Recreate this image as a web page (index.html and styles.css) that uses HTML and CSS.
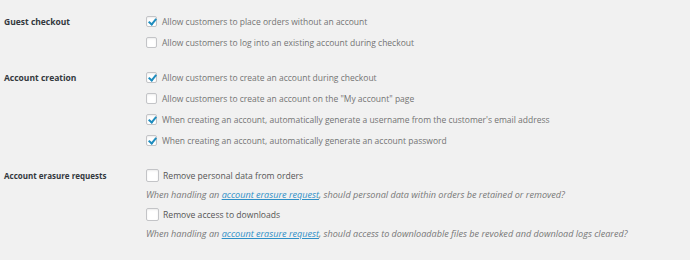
FILE: index.html
```html
<!DOCTYPE html>
<html lang="en">
<head>
    <meta charset="UTF-8">
    <meta name="viewport" content="width=device-width, initial-scale=1.0">
    <title>Accounts &amp; Privacy</title>
    <link rel="stylesheet" href="styles.css">
</head>
<body>
    <div class="settings">
        <div class="section">
            <div class="label">Guest checkout</div>
            <div class="options">
                <label class="option"><span class="box checked"></span>Allow customers to place orders without an account</label>
                <label class="option"><span class="box"></span>Allow customers to log into an existing account during checkout</label>
            </div>
        </div>
        <div class="section">
            <div class="label">Account creation</div>
            <div class="options">
                <label class="option"><span class="box checked"></span>Allow customers to create an account during checkout</label>
                <label class="option"><span class="box"></span>Allow customers to create an account on the "My account" page</label>
                <label class="option"><span class="box checked"></span>When creating an account, automatically generate a username from the customer's email address</label>
                <label class="option"><span class="box checked"></span>When creating an account, automatically generate an account password</label>
            </div>
        </div>
        <div class="section erasure">
            <div class="label">Account erasure requests</div>
            <div class="options">
                <label class="option"><span class="box"></span>Remove personal data from orders</label>
                <p class="desc">When handling an <a href="#">account erasure request</a>, should personal data within orders be retained or removed?</p>
                <label class="option"><span class="box"></span>Remove access to downloads</label>
                <p class="desc">When handling an <a href="#">account erasure request</a>, should access to downloadable files be revoked and download logs cleared?</p>
            </div>
        </div>
    </div>
</body>
</html>
```

FILE: styles.css
```css
body {
    margin: 0;
    background-color: #f1f1f1;
    font-family: "Open Sans", sans-serif;
}

.settings {
    padding: 11px 0 0 4px;
}

.section {
    display: grid;
    grid-template-columns: 142px 1fr;
    margin-bottom: 14px;
}

.label {
    font-size: 8.5px;
    font-weight: bold;
    color: #33383d;
    line-height: 21px;
}

.options {
    display: flex;
    flex-direction: column;
}

.option {
    display: flex;
    align-items: center;
    gap: 5px;
    height: 21px;
    font-size: 8.5px;
    color: #747474;
}

.box {
    width: 9px;
    height: 9px;
    border: 1px solid #c3c4c7;
    border-radius: 2px;
    background: #fff;
    box-shadow: inset 0 1px 2px rgba(0, 0, 0, 0.08);
    position: relative;
}

.box.checked::after {
    content: "";
    position: absolute;
    left: 3px;
    top: 0;
    width: 3px;
    height: 6px;
    border: solid #1e8cbe;
    border-width: 0 2px 2px 0;
    transform: rotate(40deg);
}

.erasure {
    margin-top: 1px;
}

.erasure .label {
    font-size: 8px;
}

.erasure .option {
    font-size: 8.6px;
    color: #555;
    gap: 4px;
}

.erasure .box {
    width: 11px;
    height: 11px;
}

.desc {
    margin: 0;
    font-size: 9.1px;
    font-style: italic;
    color: #777;
    line-height: 18px;
    height: 18px;
}

.desc a {
    color: #2e8fc7;
}
```
